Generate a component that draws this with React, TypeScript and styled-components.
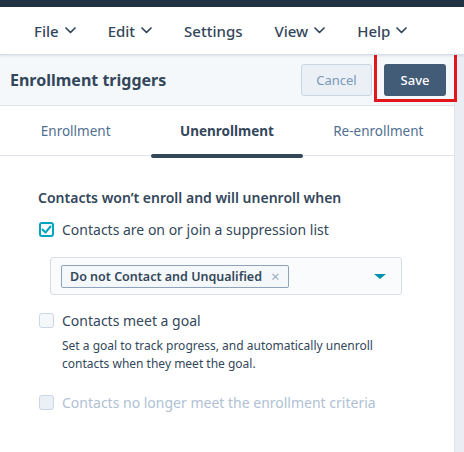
import styled, { createGlobalStyle } from "styled-components";

const GlobalStyle = createGlobalStyle`
  body {
    margin: 0;
    background: #ffffff;
    font-family: "Noto Sans", "Open Sans", sans-serif;
    color: #33475b;
  }
`;

const Chevron = () => (
  <svg width="11" height="7" viewBox="0 0 11 7" fill="none">
    <path d="M1 1l4.5 4.5L10 1" stroke="#33475b" strokeWidth="1.7" strokeLinecap="round" strokeLinejoin="round" />
  </svg>
);

const Check = () => (
  <svg width="11" height="9" viewBox="0 0 11 9" fill="none">
    <path d="M1.5 4.5l3 3L9.5 1.5" stroke="#00a4bd" strokeWidth="2" strokeLinecap="round" strokeLinejoin="round" />
  </svg>
);

const menu = [
  { label: "File", caret: true },
  { label: "Edit", caret: true },
  { label: "Settings", caret: false },
  { label: "View", caret: true },
  { label: "Help", caret: true },
];

const tabs = ["Enrollment", "Unenrollment", "Re-enrollment"];

export default function App() {
  return (
    <Page>
      <GlobalStyle />
      <TopStrip />
      <MenuBar>
        {menu.map((m) => (
          <MenuItem key={m.label}>
            {m.label}
            {m.caret && <Chevron />}
          </MenuItem>
        ))}
      </MenuBar>
      <Body>
        <Panel>
          <Header>
            <Title>Enrollment triggers</Title>
            <Actions>
              <CancelButton>Cancel</CancelButton>
              <SaveWrap>
                <SaveButton>Save</SaveButton>
                <Highlight />
              </SaveWrap>
            </Actions>
          </Header>
          <Tabs>
            {tabs.map((t) => (
              <Tab key={t} active={t === "Unenrollment"}>
                {t}
              </Tab>
            ))}
          </Tabs>
          <Content>
            <Heading>Contacts won’t enroll and will unenroll when</Heading>
            <Option>
              <Box state="checked">
                <Check />
              </Box>
              <Label>Contacts are on or join a suppression list</Label>
            </Option>
            <Select>
              <Tag>
                Do not Contact and Unqualified
                <Remove>×</Remove>
              </Tag>
              <Caret />
            </Select>
            <Option>
              <Box state="empty" />
              <Label>Contacts meet a goal</Label>
            </Option>
            <Help>
              Set a goal to track progress, and automatically unenroll
              <br />
              contacts when they meet the goal.
            </Help>
            <Option disabled>
              <Box state="disabled" />
              <Label>Contacts no longer meet the enrollment criteria</Label>
            </Option>
          </Content>
        </Panel>
        <SideStrip />
      </Body>
    </Page>
  );
}

const Page = styled.div`
  width: 464px;
  height: 452px;
  display: flex;
  flex-direction: column;
  overflow: hidden;
`;

const TopStrip = styled.div`
  height: 7px;
  background: #213343;
`;

const MenuBar = styled.div`
  height: 47px;
  display: flex;
  align-items: center;
  gap: 32px;
  padding-left: 34px;
  background: #ffffff;
  border-bottom: 1px solid #d6dde6;
  box-shadow: 0 1px 2px rgba(45, 62, 80, 0.12);
  position: relative;
  z-index: 1;
`;

const MenuItem = styled.div`
  display: flex;
  align-items: center;
  gap: 6px;
  font-size: 15px;
  font-weight: 500;
  color: #33475b;
`;

const Body = styled.div`
  flex: 1;
  display: flex;
`;

const Panel = styled.div`
  width: 454px;
  display: flex;
  flex-direction: column;
`;

const SideStrip = styled.div`
  flex: 1;
  background: #eaeef4;
  border-left: 1px solid #dfe3eb;
`;

const Header = styled.div`
  height: 50px;
  display: flex;
  align-items: center;
  justify-content: space-between;
  padding: 0 8px 0 10px;
  background: #f5f8fa;
  border-bottom: 1px solid #dfe3eb;
`;

const Title = styled.div`
  font-size: 16px;
  font-weight: 700;
  color: #33475b;
`;

const Actions = styled.div`
  display: flex;
  align-items: center;
  gap: 12px;
`;

const CancelButton = styled.div`
  width: 71px;
  height: 32px;
  box-sizing: border-box;
  display: flex;
  align-items: center;
  justify-content: center;
  background: #eaf0f6;
  border: 1px solid #cbd6e2;
  border-radius: 3px;
  font-size: 13px;
  color: #7c98b6;
`;

const SaveWrap = styled.div`
  position: relative;
`;

const SaveButton = styled.div`
  width: 62px;
  height: 32px;
  display: flex;
  align-items: center;
  justify-content: center;
  background: #425b76;
  border-radius: 3px;
  font-size: 13px;
  font-weight: 500;
  color: #ffffff;
`;

const Highlight = styled.div`
  position: absolute;
  left: -10px;
  top: -12px;
  right: -11px;
  bottom: -6px;
  border: 3px solid #e3161b;
`;

const Tabs = styled.div`
  height: 49px;
  display: grid;
  grid-template-columns: repeat(3, 1fr);
  border-bottom: 1px solid #dfe3eb;
`;

const Tab = styled.div<{ active?: boolean }>`
  position: relative;
  display: flex;
  align-items: center;
  justify-content: center;
  font-size: 13.5px;
  font-weight: ${({ active }) => (active ? 700 : 400)};
  color: ${({ active }) => (active ? "#33475b" : "#516f90")};

  &::after {
    content: "";
    display: ${({ active }) => (active ? "block" : "none")};
    position: absolute;
    left: 0;
    right: 0;
    bottom: -3px;
    height: 4px;
    border-radius: 2px;
    background: #33475b;
  }
`;

const Content = styled.div`
  display: flex;
  flex-direction: column;
  padding: 32px 0 0 38px;
`;

const Heading = styled.div`
  font-size: 14px;
  font-weight: 600;
  color: #33475b;
  line-height: 20px;
  margin-bottom: 11px;
`;

const Option = styled.div<{ disabled?: boolean }>`
  display: flex;
  align-items: center;
  gap: 8px;
  height: 20px;
  padding-left: 1px;
  color: ${({ disabled }) => (disabled ? "#b0c1d4" : "#33475b")};
`;

const boxStyles = {
  checked: "border: 2px solid #00a4bd; background: #ffffff;",
  empty: "border: 1px solid #cbd6e2; background: #f5f8fa;",
  disabled: "border: 1px solid #cbd6e2; background: #eaf0f6;",
};

const Box = styled.div<{ state: keyof typeof boxStyles }>`
  width: 15px;
  height: 15px;
  box-sizing: border-box;
  border-radius: 3px;
  display: flex;
  align-items: center;
  justify-content: center;
  ${({ state }) => boxStyles[state]}
`;

const Label = styled.div`
  font-size: 14px;
`;

const Select = styled.div`
  width: 352px;
  height: 38px;
  box-sizing: border-box;
  margin: 18px 0 15px 12px;
  padding: 0 15px 0 10px;
  display: flex;
  align-items: center;
  justify-content: space-between;
  background: #f9fbfc;
  border: 1px solid #d6dde6;
  border-radius: 3px;
`;

const Tag = styled.div`
  height: 23px;
  box-sizing: border-box;
  display: flex;
  align-items: center;
  gap: 9px;
  padding: 0 8px;
  white-space: nowrap;
  background: #f5f8fa;
  border: 1px solid #8da3bb;
  border-radius: 2px;
  font-size: 12.5px;
  font-weight: 600;
  color: #33475b;
`;

const Remove = styled.span`
  font-weight: 400;
  font-size: 15px;
  color: #99afc4;
`;

const Caret = styled.div`
  width: 0;
  height: 0;
  border-left: 6px solid transparent;
  border-right: 6px solid transparent;
  border-top: 5px solid #0091ae;
`;

const Help = styled.div`
  padding-left: 24px;
  margin-top: 7px;
  font-size: 12px;
  line-height: 18px;
  color: #33475b;
  margin-bottom: 19px;
`;
